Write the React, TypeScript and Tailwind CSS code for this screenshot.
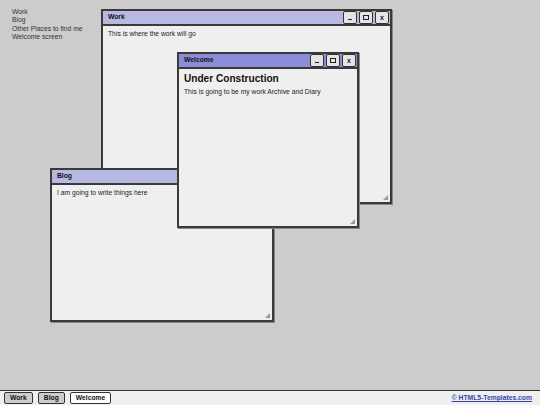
import type { ReactNode } from "react";

type WinProps = {
  title: string;
  active?: boolean;
  className: string;
  children: ReactNode;
};

const WinButton = ({ children }: { children: ReactNode }) => (
  <div className="flex h-[13px] w-[14px] items-center justify-center rounded-[2px] border border-[#333] bg-[#e4e4e4] text-[7px] font-bold leading-none text-[#222]">
    {children}
  </div>
);

const Window = ({ title, active, className, children }: WinProps) => (
  <div
    className={`absolute flex flex-col border-2 border-[#3a3a3a] bg-[#efefef] shadow-[1px_1px_0_#888] ${className}`}
  >
    <div
      className={`flex h-[15px] shrink-0 items-center justify-between border-b-2 border-[#3a3a3a] pl-[5px] pr-[1px] ${
        active ? "bg-[#8c8cd8]" : "bg-[#b8b8e2]"
      }`}
    >
      <span className="text-[6.75px] font-bold text-[#111]">{title}</span>
      <div className="flex gap-[2px]">
        <WinButton>
          <span className="mt-[3px] block h-[1px] w-[4px] bg-[#222]" />
        </WinButton>
        <WinButton>
          <span className="block h-[5px] w-[6px] border border-[#222]" />
        </WinButton>
        <WinButton>x</WinButton>
      </div>
    </div>
    <div className="relative flex-1 px-[5px] pt-[3px] text-[6.75px] text-[#222]">
      {children}
      <svg
        className="absolute bottom-[2px] right-[2px]"
        width="5"
        height="5"
        viewBox="0 0 5 5"
      >
        <path d="M5 0 L5 5 L0 5 Z" fill="#999" />
      </svg>
    </div>
  </div>
);

const TaskButton = ({ label, active }: { label: string; active?: boolean }) => (
  <div
    className={`flex h-[12px] items-center rounded-[2px] border border-[#333] px-[5px] text-[6.75px] font-bold text-[#111] ${
      active ? "bg-white" : "bg-[#cccccc]"
    }`}
  >
    {label}
  </div>
);

export default function App() {
  return (
    <div
      className="flex h-[405px] w-[540px] flex-col overflow-hidden bg-[#cccccc]"
      style={{ fontFamily: '"Liberation Sans", Arial, sans-serif' }}
    >
      <div className="relative flex-1">
        <ul className="pl-[12px] pt-[8px] text-[6.75px] leading-[8.4px] text-[#333]">
          <li>Work</li>
          <li>Blog</li>
          <li>Other Places to find me</li>
          <li>Welcome screen</li>
        </ul>

        <Window title="Work" className="left-[101px] top-[9px] h-[195px] w-[291px]">
          <p>This is where the work will go</p>
        </Window>

        <Window title="Blog" className="left-[50px] top-[168px] h-[154px] w-[224px]">
          <p>I am going to write things here</p>
        </Window>

        <Window
          title="Welcome"
          active
          className="left-[177px] top-[52px] h-[176px] w-[182px]"
        >
          <h1 className="mb-[2px] text-[10.1px] font-bold leading-[13px] text-[#111]">
            Under Construction
          </h1>
          <p>This is going to be my work Archive and Diary</p>
        </Window>
      </div>

      <div className="flex h-[15px] shrink-0 items-center justify-between border-t border-[#333] bg-[#efefef] pl-[4px] pr-[8px]">
        <div className="flex gap-[5px]">
          <TaskButton label="Work" />
          <TaskButton label="Blog" />
          <TaskButton label="Welcome" active />
        </div>
        <a href="#" className="text-[6.75px] font-bold text-[#3344aa] underline">
          © HTML5-Templates.com
        </a>
      </div>
    </div>
  );
}
